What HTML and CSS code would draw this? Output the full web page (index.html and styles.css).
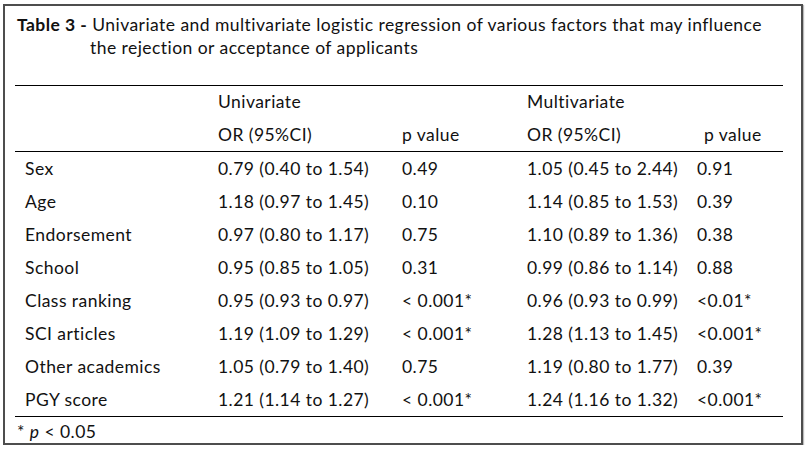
FILE: index.html
```html
<!DOCTYPE html>
<html>
<head>
<meta charset="utf-8">
<link rel="stylesheet" href="styles.css">
</head>
<body>
<div class="box">
  <p class="title"><b>Table 3 -</b> Univariate and multivariate logistic regression of various factors that may influence the rejection or acceptance of applicants</p>
  <table class="data">
    <colgroup>
      <col class="c1"><col class="c2"><col class="c3"><col class="c4"><col class="c5">
    </colgroup>
    <thead>
      <tr class="h1"><th></th><th>Univariate</th><th></th><th>Multivariate</th><th></th></tr>
      <tr class="h2"><th></th><th>OR (95%CI)</th><th>p value</th><th>OR (95%CI)</th><th class="pv2">p value</th></tr>
    </thead>
    <tbody>
      <tr><td>Sex</td><td>0.79 (0.40 to 1.54)</td><td>0.49</td><td>1.05 (0.45 to 2.44)</td><td>0.91</td></tr>
      <tr><td>Age</td><td>1.18 (0.97 to 1.45)</td><td>0.10</td><td>1.14 (0.85 to 1.53)</td><td>0.39</td></tr>
      <tr><td>Endorsement</td><td>0.97 (0.80 to 1.17)</td><td>0.75</td><td>1.10 (0.89 to 1.36)</td><td>0.38</td></tr>
      <tr><td>School</td><td>0.95 (0.85 to 1.05)</td><td>0.31</td><td>0.99 (0.86 to 1.14)</td><td>0.88</td></tr>
      <tr><td>Class ranking</td><td>0.95 (0.93 to 0.97)</td><td>&lt; 0.001*</td><td>0.96 (0.93 to 0.99)</td><td>&lt;0.01*</td></tr>
      <tr><td>SCI articles</td><td>1.19 (1.09 to 1.29)</td><td>&lt; 0.001*</td><td>1.28 (1.13 to 1.45)</td><td>&lt;0.001*</td></tr>
      <tr><td>Other academics</td><td>1.05 (0.79 to 1.40)</td><td>0.75</td><td>1.19 (0.80 to 1.77)</td><td>0.39</td></tr>
      <tr><td>PGY score</td><td>1.21 (1.14 to 1.27)</td><td>&lt; 0.001*</td><td>1.24 (1.16 to 1.32)</td><td>&lt;0.001*</td></tr>
    </tbody>
  </table>
  <p class="foot">* <i>p</i> &lt; 0.05</p>
</div>
</body>
</html>
```

FILE: styles.css
```css
html, body {
  margin: 0;
  padding: 0;
  background: #fff;
}
body {
  font-family: Lato, "Open Sans", sans-serif;
  font-size: 17.5px;
  letter-spacing: 0.45px;
  color: #111;
}
.box {
  box-sizing: border-box;
  margin: 4px 0 0 3px;
  width: 800px;
  height: 441px;
  border: 2px solid #4d4d4d;
  box-shadow: 1px 1px 1px #bbb;
  padding: 0 18px 0 10px;
}
.title {
  margin: 0;
  padding: 7px 0 0 75px;
  text-indent: -73px;
  line-height: 23px;
  height: 72px;
  box-sizing: content-box;
}
.title b {
  font-weight: 700;
}
.data {
  width: 768px;
  border-collapse: collapse;
  table-layout: fixed;
  border-top: 1px solid #000;
  border-bottom: 1px solid #000;
}
.c1 { width: 193px; }
.c2 { width: 184px; }
.c3 { width: 125px; }
.c4 { width: 170px; }
.c5 { width: 96px; }
.data th, .data td {
  padding: 0 0 0 10px;
  text-align: left;
  font-weight: 400;
  white-space: nowrap;
  height: 33px;
  line-height: 32px;
}
.data thead tr.h1 th { height: 32px; line-height: 32px; }
.data thead tr.h2 th { height: 33px; line-height: 32px; }
.data thead tr.h2 { border-bottom: 1px solid #000; }
.data th.pv2 { padding-left: 17px; }
.foot {
  margin: 0;
  padding-left: 2px;
  line-height: 30px;
}
.foot i { font-style: italic; }
```
